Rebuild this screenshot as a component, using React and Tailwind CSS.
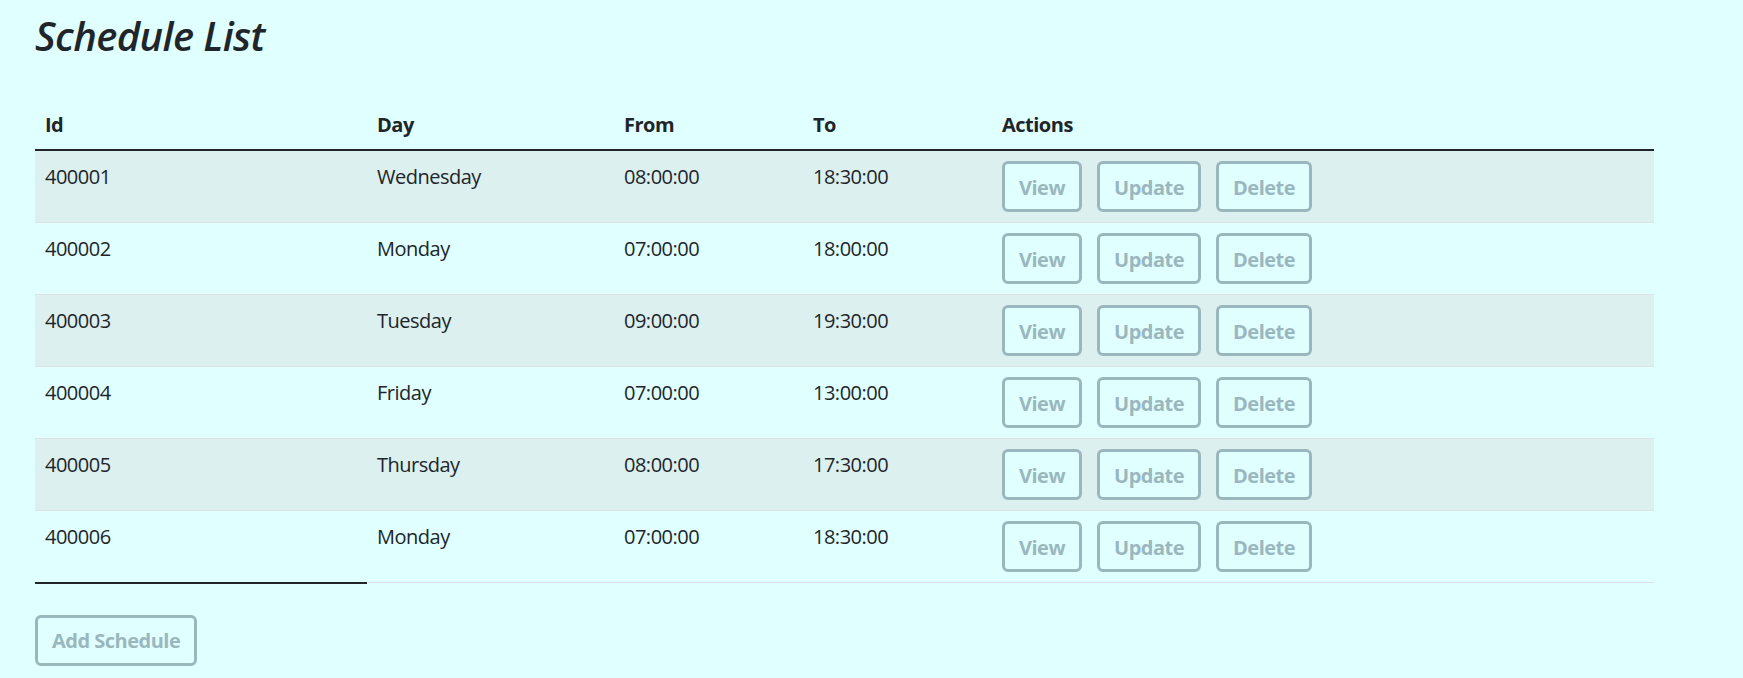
const schedules = [
  { id: '400001', day: 'Wednesday', from: '08:00:00', to: '18:30:00' },
  { id: '400002', day: 'Monday', from: '07:00:00', to: '18:00:00' },
  { id: '400003', day: 'Tuesday', from: '09:00:00', to: '19:30:00' },
  { id: '400004', day: 'Friday', from: '07:00:00', to: '13:00:00' },
  { id: '400005', day: 'Thursday', from: '08:00:00', to: '17:30:00' },
  { id: '400006', day: 'Monday', from: '07:00:00', to: '18:30:00' },
];

const btn =
  'border-[3px] border-[#9ab7be] text-[#9ab7be] bg-[#e0ffff] rounded-[6px] px-[14px] pt-[8.5px] pb-[6.5px] font-bold leading-[30px]';

const cell = 'px-[10px] pt-[11px] pb-[9px] text-left leading-[30px]';

const App = () => {
  return (
    <div className="min-h-screen bg-[#e0ffff] px-[35px] pt-[12px] pb-[12px] text-[20px] tracking-[-0.5px] text-[#212529] font-['Open_Sans','Noto_Sans',sans-serif]">
      <h2 className="text-[40px] leading-[48px] font-semibold italic tracking-[-0.6px]">Schedule List</h2>

      {/* Schedules table */}
      <table className="mt-[39px] w-[1619px] table-fixed border-collapse">
        <colgroup>
          <col className="w-[332px]" />
          <col className="w-[247px]" />
          <col className="w-[189px]" />
          <col className="w-[189px]" />
          <col />
        </colgroup>
        <thead>
          <tr className="border-b-2 border-[#212529]">
            <th className={`${cell} font-bold`}>Id</th>
            <th className={`${cell} font-bold`}>Day</th>
            <th className={`${cell} font-bold`}>From</th>
            <th className={`${cell} font-bold`}>To</th>
            <th className={`${cell} font-bold`}>Actions</th>
          </tr>
        </thead>
        <tbody>
          {schedules.map((s) => (
            <tr key={s.id} className="border-b border-[#dee2e6] odd:bg-[#dcf0f0]">
              <td className={`${cell} align-top`}>{s.id}</td>
              <td className={`${cell} align-top`}>{s.day}</td>
              <td className={`${cell} align-top`}>{s.from}</td>
              <td className={`${cell} align-top`}>{s.to}</td>
              <td className="p-[10px] align-top">
                <div className="flex gap-[15px]">
                  <button className={btn}>View</button>
                  <button className={btn}>Update</button>
                  <button className={btn}>Delete</button>
                </div>
              </td>
            </tr>
          ))}
        </tbody>
        <tfoot>
          <tr>
            <td className="p-0 border-t-2 border-[#212529]"></td>
            <td className="p-0"></td>
            <td className="p-0"></td>
            <td className="p-0"></td>
            <td className="p-0"></td>
          </tr>
        </tfoot>
      </table>

      <button className={`${btn} mt-[31px]`}>Add Schedule</button>
    </div>
  );
};

export default App;
